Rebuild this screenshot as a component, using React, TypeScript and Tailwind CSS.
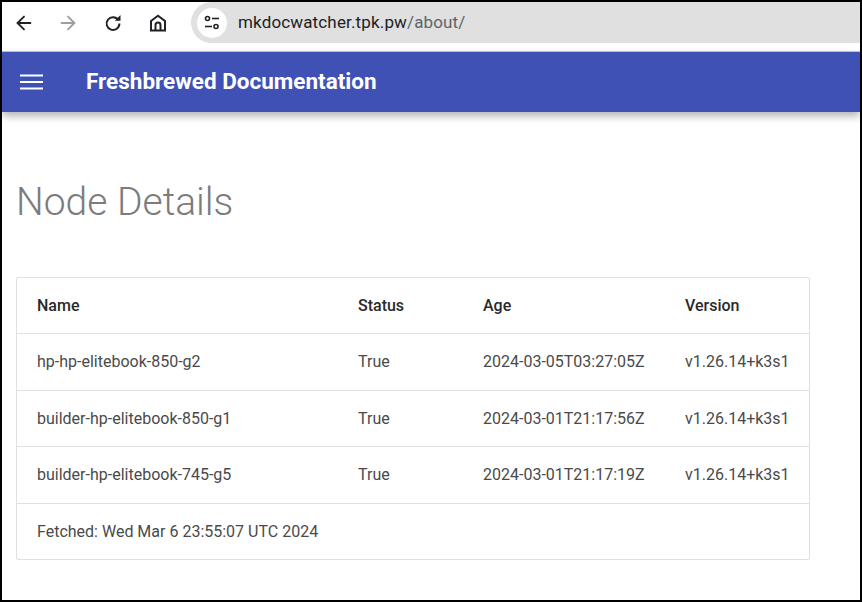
import { ArrowLeft, ArrowRight } from "lucide-react";

const nodes = [
  { name: "hp-hp-elitebook-850-g2", status: "True", age: "2024-03-05T03:27:05Z", version: "v1.26.14+k3s1" },
  { name: "builder-hp-elitebook-850-g1", status: "True", age: "2024-03-01T21:17:56Z", version: "v1.26.14+k3s1" },
  { name: "builder-hp-elitebook-745-g5", status: "True", age: "2024-03-01T21:17:19Z", version: "v1.26.14+k3s1" },
];

const cols = "grid grid-cols-[321px_125px_202px_1fr] pl-5 items-center";

const ReloadIcon = () => (
  <svg width="18" height="18" viewBox="0 0 18 18" fill="none" stroke="#202124" strokeWidth="2">
    <path d="M14.3 6A6.4 6.4 0 1 0 15.4 9.5" />
    <path d="M10.8 6.8h5.7V1.1z" fill="#202124" stroke="none" />
  </svg>
);

const HomeIcon = () => (
  <svg width="18" height="18" viewBox="0 0 18 18" fill="none" stroke="#202124" strokeWidth="2">
    <path d="M2 7 9 1.7 16 7V16.5H2z" />
    <path d="M6.5 16.5V11a2.5 2.5 0 0 1 5 0v5.5" />
  </svg>
);

const TuneIcon = () => (
  <svg width="18" height="18" viewBox="0 0 18 18" fill="none" stroke="#202124" strokeWidth="1.6">
    <circle cx="4.5" cy="4.5" r="2" />
    <path d="M9 4.5h7" />
    <circle cx="13" cy="12.5" r="2" />
    <path d="M2 12.5h7" />
  </svg>
);

const App = () => {
  return (
    <div className="flex h-[602px] w-[862px] flex-col overflow-hidden border-2 border-black bg-white font-['Roboto',sans-serif]">
      <div className="flex h-[50px] shrink-0 items-start border-b border-[#c8c8c8] bg-white">
        <div className="flex h-[41px] w-[189px] shrink-0 items-center pl-[11px] pt-[1px]">
          <ArrowLeft size={22} color="#202124" strokeWidth={2} />
          <ArrowRight size={22} color="#9e9e9e" strokeWidth={2} className="ml-[22px]" />
          <span className="ml-[25px] flex">
            <ReloadIcon />
          </span>
          <span className="ml-[27px] flex">
            <HomeIcon />
          </span>
        </div>
        <div className="flex h-[41px] flex-1 items-center rounded-l-full bg-[#e0e0e0] pl-[6px]">
          <div className="flex h-[30px] w-[30px] items-center justify-center rounded-full bg-white">
            <TuneIcon />
          </div>
          <span className="ml-[11px] text-[17px] tracking-[0.15px] text-[#202124]">
            mkdocwatcher.tpk.pw<span className="text-[#5f6368]">/about/</span>
          </span>
        </div>
      </div>

      <header className="flex h-[60px] shrink-0 items-center bg-[#3f51b5] text-white shadow-[0_4px_8px_rgba(0,0,0,0.3)]">
        <svg className="ml-[18px]" width="24" height="18" viewBox="0 0 24 18" fill="none" stroke="white" strokeWidth="2.2">
          <path d="M0 2.5h23M0 9h23M0 15.5h23" />
        </svg>
        <span className="ml-[42px] pb-[1px] text-[22.5px] font-bold">Freshbrewed Documentation</span>
      </header>

      <main className="flex-1 pl-[14px]">
        <h1 className="mt-[65px] text-[39px] leading-[50px] font-light text-[#7c7c7c]">Node Details</h1>
        <div className="mt-[50px] w-[794px] rounded-[2px] border border-[#e0e0e0] text-[16px] text-[#4a4a4a]">
          <div className={`${cols} h-[55px] font-medium text-[#2a2a2a]`}>
            <span>Name</span>
            <span>Status</span>
            <span>Age</span>
            <span>Version</span>
          </div>
          {nodes.map((n) => (
            <div key={n.name} className={`${cols} h-[56.5px] border-t border-[#e0e0e0] pt-[1px]`}>
              <span>{n.name}</span>
              <span>{n.status}</span>
              <span>{n.age}</span>
              <span>{n.version}</span>
            </div>
          ))}
          <div className="flex h-[56px] items-center border-t border-[#e0e0e0] pl-5 pt-[1px]">
            Fetched: Wed Mar 6 23:55:07 UTC 2024
          </div>
        </div>
      </main>
    </div>
  );
};

export default App;
